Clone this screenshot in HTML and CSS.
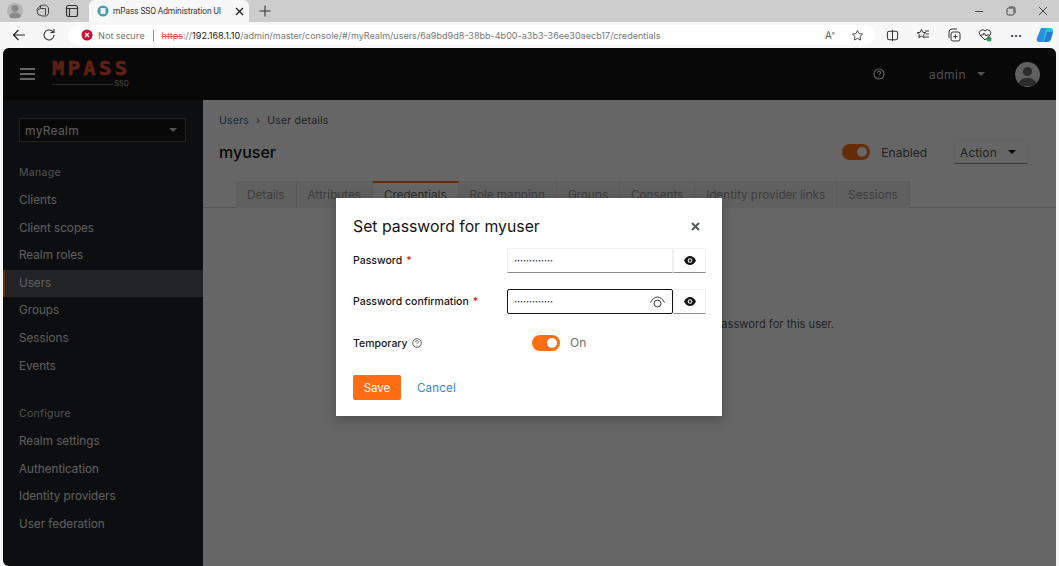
FILE: index.html
```html
<!DOCTYPE html>
<html lang="en">

<head>
    <meta charset="UTF-8">
    <meta name="viewport" content="width=device-width, initial-scale=1.0">
    <title>mPass SSO Administration UI</title>
    <link rel="stylesheet" href="styles.css">
</head>

<body>
    <div class="tabbar">
        <span class="profile">
            <svg width="16" height="16" viewBox="0 0 16 16"><circle cx="8" cy="5.500" r="3.400" fill="#8a8a8a"/><path d="M2 15c0-4 2.500-5.500 6-5.500s6 1.500 6 5.500z" fill="#8a8a8a"/></svg>
        </span>
        <svg class="tab-tool" width="14" height="14" viewBox="0 0 14 14" fill="none" stroke="#444"><path d="M4.500 1.500l5-.5 3 2.500v6l-2 2.500h-4l-4.500-1.500-1-5z"/><path d="M4.500 4.500h5v6.500M4.500 1.500v3l-3 1.500"/></svg>
        <svg class="tab-tool" width="14" height="14" viewBox="0 0 14 14" fill="none" stroke="#333" stroke-width="1.200"><rect x="1.500" y="1.500" width="11" height="11" rx="2"/><path d="M1.500 4.500h11M4.500 4.500v8"/></svg>
        <div class="tab">
            <svg class="tab-icon" width="12" height="12" viewBox="0 0 12 12"><circle cx="6" cy="6" r="5.500" fill="#4a9bb5"/><rect x="3.500" y="3" width="5" height="6" fill="#e8f4f8"/></svg>
            <span class="tab-title">mPass SSO Administration UI</span>
            <svg class="tab-icon" width="9" height="9" viewBox="0 0 9 9" stroke="#222" stroke-width="1.300"><path d="M1 1l7 7M8 1l-7 7"/></svg>
        </div>
        <svg class="new-tab" width="12" height="12" viewBox="0 0 12 12" stroke="#333" stroke-width="1.100"><path d="M6 .5v11M.5 6h11"/></svg>
        <div class="window-btns">
            <svg width="10" height="10" viewBox="0 0 10 10" stroke="#444"><path d="M1 5.500h8"/></svg>
            <svg width="10" height="10" viewBox="0 0 10 10" fill="none" stroke="#444"><rect x="1" y="2" width="7" height="7" rx="1.500"/><path d="M3 1h4.500a1.500 1.500 0 0 1 1.500 1.500V7"/></svg>
            <svg width="10" height="10" viewBox="0 0 10 10" stroke="#444"><path d="M1 1l8 8M9 1l-8 8"/></svg>
        </div>
    </div>

    <div class="toolbar">
        <svg width="14" height="14" viewBox="0 0 14 14" fill="none" stroke="#222" stroke-width="1.200"><path d="M13 7H1.500M6.500 2l-5 5 5 5"/></svg>
        <svg class="reload" width="14" height="14" viewBox="0 0 14 14" fill="none" stroke="#333" stroke-width="1.100"><path d="M12 7a5 5 0 1 1-1.700-3.800L12 4.500M12 1v3.500H8.500"/></svg>
        <div class="addressbar">
            <svg class="tab-icon" width="12" height="12" viewBox="0 0 12 12"><circle cx="6" cy="6" r="5.500" fill="#c8102e"/><path d="M4 4l4 4M8 4l-4 4" stroke="#fff" stroke-width="1.200"/></svg>
            <span class="not-secure">Not secure</span>
            <span class="addr-sep"></span>
            <span class="url"><s class="url-https">https</s><span class="url-rest">://</span><span class="url-host">192.168.1.10</span><span class="url-rest">/admin/master/console/#/myRealm/users/6a9bd9d8-38bb-4b00-a3b3-36ee30aecb17/credentials</span></span>
            <span class="read-aloud">A<sup>»</sup></span>
            <svg width="13" height="13" viewBox="0 0 14 14" fill="none" stroke="#444"><path d="M7 1.500l1.700 3.500 3.800.5-2.800 2.600.7 3.800L7 10.100l-3.400 1.800.7-3.800-2.800-2.600 3.800-.5z"/></svg>
        </div>
        <div class="toolbar-icons">
            <svg width="13" height="13" viewBox="0 0 14 14" fill="none" stroke="#333" stroke-width="1.100"><rect x="1.500" y="2.500" width="11" height="9" rx="2"/><path d="M7 1v12"/></svg>
            <svg width="14" height="14" viewBox="0 0 14 14" fill="none" stroke="#333"><path d="M5.500 1.500l1.300 2.800 3 .4-2.200 2 .6 3-2.700-1.500-2.700 1.500.6-3L1.200 4.700l3-.4zM9 3h4M10 6h3M9 9h4"/></svg>
            <svg width="14" height="14" viewBox="0 0 14 14" fill="none" stroke="#333"><rect x="4" y="4" width="9" height="9" rx="2"/><path d="M8.500 6.500v4M6.500 8.500h4M2 10V4a3 3 0 0 1 3-3h5"/></svg>
            <svg width="14" height="14" viewBox="0 0 14 14" fill="none" stroke="#333"><path d="M7 12L2 7a3 3 0 0 1 5-4 3 3 0 0 1 5 4z"/><path d="M3 7h2l1-2 2 3 1-1h2"/><circle cx="11" cy="11" r="2.500" fill="#2e9e4f" stroke="none"/></svg>
            <span class="more-dots">···</span>
            <svg width="18" height="18" viewBox="0 0 18 18"><path d="M5 2h7L8 16H3C1 16 0 14 1 12z" fill="#2a8fe0"/><path d="M10 2h4c2 0 3.500 1.500 3 4l-2 7c-.5 2-2 3-4 3H7z" fill="#28c0d8"/><path d="M11 6h6l-2 7c-.5 2-2 3-4 3H8z" fill="#1d5fd0" opacity=".7"/></svg>
        </div>
    </div>

    <div class="page">
        <header class="masthead">
            <div class="burger"><i></i><i></i><i></i></div>
            <div class="logo">
                <div class="logo-word">MPASS</div>
                <div class="logo-sub"><span class="logo-line"></span><span>SSO</span></div>
            </div>
            <svg class="help-icon" width="12" height="12" viewBox="0 0 12 12" fill="none" stroke="#fff" stroke-width="1.100"><circle cx="6" cy="6" r="5"/><path d="M4.500 4.800a1.500 1.500 0 1 1 2.200 1.300c-.5.300-.7.500-.7 1"/><path d="M6 8.300v1"/></svg>
            <span class="user-name">admin</span>
            <span class="caret caret-light"></span>
            <span class="avatar">
                <svg width="25" height="25" viewBox="0 0 25 25"><circle cx="12.500" cy="9.500" r="4.500" fill="#6a6e72"/><path d="M3.500 24c0-5.500 3.500-8 9-8s9 2.500 9 8z" fill="#6a6e72"/></svg>
            </span>
        </header>

        <div class="layout">
            <aside class="sidebar">
                <div class="realm-select"><span>myRealm</span><span class="caret caret-light"></span></div>
                <div class="nav-title">Manage</div>
                <a class="nav-item">Clients</a>
                <a class="nav-item">Client scopes</a>
                <a class="nav-item">Realm roles</a>
                <a class="nav-item active">Users</a>
                <a class="nav-item">Groups</a>
                <a class="nav-item">Sessions</a>
                <a class="nav-item">Events</a>
                <div class="nav-title nav-title-2">Configure</div>
                <a class="nav-item">Realm settings</a>
                <a class="nav-item">Authentication</a>
                <a class="nav-item">Identity providers</a>
                <a class="nav-item">User federation</a>
            </aside>

            <main class="content">
                <div class="breadcrumb"><a>Users</a><span class="crumb-sep">›</span><span>User details</span></div>
                <div class="title-row">
                    <h1 class="user-title">myuser</h1>
                    <span class="switch"><i></i></span>
                    <span class="switch-label">Enabled</span>
                    <div class="action-btn"><span>Action</span><span class="caret"></span></div>
                </div>
                <div class="tabs">
                    <span class="page-tab">Details</span>
                    <span class="page-tab">Attributes</span>
                    <span class="page-tab current">Credentials</span>
                    <span class="page-tab">Role mapping</span>
                    <span class="page-tab">Groups</span>
                    <span class="page-tab">Consents</span>
                    <span class="page-tab">Identity provider links</span>
                    <span class="page-tab">Sessions</span>
                </div>
                <p class="empty-text">This user does not have any credentials. You can set a password for this user.</p>
            </main>
        </div>

        <div class="backdrop">
            <div class="modal">
                <div class="modal-head">
                    <h2 class="modal-title">Set password for myuser</h2>
                    <svg width="9" height="9" viewBox="0 0 9 9" stroke="#55595d" stroke-width="2"><path d="M1 1l7 7M8 1l-7 7"/></svg>
                </div>
                <div class="form-row">
                    <label class="form-label">Password <em>*</em></label>
                    <div class="pw-group">
                        <div class="pw-input">·············</div>
                        <div class="pw-eye">
                            <svg width="12" height="9" viewBox="0 0 12 9"><path d="M0 4.500C1.500 1.500 3.500 0 6 0s4.500 1.500 6 4.500C10.500 7.500 8.500 9 6 9S1.500 7.500 0 4.500z" fill="#151515"/><circle cx="6" cy="4.500" r="2.200" fill="#fff"/><circle cx="6" cy="4.500" r="1.200" fill="#151515"/></svg>
                        </div>
                    </div>
                </div>
                <div class="form-row">
                    <label class="form-label">Password confirmation <em>*</em></label>
                    <div class="pw-group">
                        <div class="pw-input focused">
                            <span>·············</span>
                            <svg width="15" height="12" viewBox="0 0 15 12" fill="none" stroke="#333"><path d="M.5 6.500C2.500 3 4.800 1 7.500 1s5 2 7 5.500"/><circle cx="7.500" cy="7.500" r="3.500"/></svg>
                        </div>
                        <div class="pw-eye">
                            <svg width="12" height="9" viewBox="0 0 12 9"><path d="M0 4.500C1.500 1.500 3.500 0 6 0s4.500 1.500 6 4.500C10.500 7.500 8.500 9 6 9S1.500 7.500 0 4.500z" fill="#151515"/><circle cx="6" cy="4.500" r="2.200" fill="#fff"/><circle cx="6" cy="4.500" r="1.200" fill="#151515"/></svg>
                        </div>
                    </div>
                </div>
                <div class="form-row temp-row">
                    <label class="form-label">Temporary
                        <svg width="10" height="10" viewBox="0 0 10 10" fill="none" stroke="#555" stroke-width=".9"><circle cx="5" cy="5" r="4.300"/><path d="M3.700 4a1.300 1.300 0 1 1 1.900 1.100c-.4.200-.6.400-.6.800M5 6.800v.9"/></svg>
                    </label>
                    <div class="temp-switch">
                        <span class="switch switch-on"><i></i></span>
                        <span class="on-label">On</span>
                    </div>
                </div>
                <div class="modal-foot">
                    <button class="save-btn">Save</button>
                    <a class="cancel-link">Cancel</a>
                </div>
            </div>
        </div>
    </div>
</body>

</html>
```

FILE: styles.css
```css
* {
    margin: 0;
    padding: 0;
    box-sizing: border-box;
    font-family: 'Inter', 'Liberation Sans', sans-serif;
}

body {
    width: 1059px;
    height: 566px;
    overflow: hidden;
    background: #f7f7f7;
    display: flex;
    flex-direction: column;
}

/* browser frame */
.tabbar {
    height: 22px;
    background: #cdcdcd;
    display: flex;
    align-items: center;
    padding-left: 7px;
    flex-shrink: 0;
}
.profile {
    width: 16px;
    height: 16px;
    border-radius: 50%;
    background: #b4b4b4;
    overflow: hidden;
}
.tab-tool {
    margin-left: 13px;
}
.tab-tool + .tab-tool {
    margin-left: 15px;
}
.tab {
    width: 160px;
    height: 22px;
    margin-left: 10px;
    background: #f7f7f7;
    border-radius: 6px 6px 0 0;
    display: flex;
    align-items: center;
    padding: 0 5px 0 8px;
}
.tab-icon {
    flex-shrink: 0;
}
.tab-title {
    font-family: 'Roboto', sans-serif;
    font-size: 8.400px;
    letter-spacing: -.08px;
    color: #333;
    margin-left: 4px;
    flex: 1;
    white-space: nowrap;
    overflow: hidden;
}
.new-tab {
    margin-left: 10px;
}
.window-btns {
    margin-left: auto;
    display: flex;
    gap: 22px;
    padding-right: 11px;
}

.toolbar {
    height: 26px;
    background: #f7f7f7;
    display: flex;
    align-items: center;
    padding: 0 0 0 12px;
    flex-shrink: 0;
}
.reload {
    margin-left: 16px;
}
.addressbar {
    width: 807px;
    height: 20px;
    margin-left: 12px;
    background: #fff;
    border-radius: 10px;
    display: flex;
    align-items: center;
    padding: 0 11px 0 13px;
}
.not-secure {
    font-family: 'Open Sans', sans-serif;
    font-size: 9.200px;
    color: #666;
    margin-left: 5px;
}
.addr-sep {
    width: 1px;
    height: 11px;
    background: #888;
    margin: 0 8px;
}
.url {
    font-family: 'Open Sans', sans-serif;
    font-size: 9.050px;
    flex: 1;
    white-space: nowrap;
}
.url-https {
    color: #d9534f;
}
.url-rest {
    color: #777;
}
.url-host {
    color: #222;
}
.read-aloud {
    font-family: 'Open Sans', sans-serif;
    font-size: 10px;
    color: #555;
    margin-right: 16px;
}
.read-aloud sup {
    font-size: 6px;
}
.toolbar-icons {
    display: flex;
    align-items: center;
    gap: 17px;
    margin-left: 11px;
}
.more-dots {
    font-size: 12px;
    font-weight: 700;
    color: #333;
    margin-left: 1px;
    margin-right: -3px;
}

/* page */
.page {
    position: relative;
    flex: 1;
    margin: 0 3px 0 3px;
    border-radius: 6px 6px 0 6px;
    overflow: hidden;
    background: #fff;
    display: flex;
    flex-direction: column;
}
.masthead {
    height: 52px;
    background: #151515;
    display: flex;
    align-items: center;
    padding: 0 16px 0 17px;
    color: #fff;
    flex-shrink: 0;
}
.burger {
    display: flex;
    flex-direction: column;
    gap: 3px;
    width: 15px;
}
.burger i {
    height: 2px;
    background: #fff;
}
.logo {
    margin-left: 17px;
    width: 77px;
    margin-top: 1px;
}
.logo-word {
    font-family: 'DejaVu Sans Mono', monospace;
    font-weight: 700;
    font-size: 19px;
    line-height: 15px;
    height: 15px;
    letter-spacing: 3.200px;
    color: #f0502f;
    -webkit-text-stroke: .5px #f0502f;
    transform: scaleX(1.07);
    transform-origin: left;
}
.logo-sub {
    display: flex;
    align-items: center;
    gap: 2px;
    margin-top: 4px;
    font-size: 7px;
    line-height: 8px;
    color: #999;
    font-weight: 600;
}
.logo-line {
    flex: 1;
    height: 1px;
    background: #666;
}
.help-icon {
    margin-left: auto;
}
.user-name {
    margin-left: 44px;
    font-size: 12px;
    letter-spacing: .5px;
    color: #c8c8c8;
}
.caret {
    display: inline-block;
    width: 0;
    height: 0;
    border-left: 4px solid transparent;
    border-right: 4px solid transparent;
    border-top: 4px solid #151515;
}
.caret-light {
    border-top-color: #ccc;
}
.masthead .caret {
    margin-left: 11px;
}
.avatar {
    width: 25px;
    height: 25px;
    border-radius: 50%;
    background: #f0f0f0;
    margin-left: 30px;
    overflow: hidden;
}

.layout {
    flex: 1;
    display: flex;
    min-height: 0;
}
.sidebar {
    width: 200px;
    background: #212427;
    padding-top: 18px;
    color: #e8e8e8;
    flex-shrink: 0;
}
.realm-select {
    width: 167px;
    height: 24px;
    margin-left: 16px;
    background: #151515;
    border: 1px solid #555;
    display: flex;
    align-items: center;
    justify-content: space-between;
    padding: 0 8px 0 5px;
    font-size: 12px;
    letter-spacing: .3px;
}
.nav-title {
    font-size: 10.500px;
    letter-spacing: .3px;
    padding-left: 16px;
    margin-top: 23px;
    height: 22px;
    line-height: 16px;
    color: #c8c8c8;
}
.nav-title-2 {
    margin-top: 26px;
}
.nav-item {
    display: block;
    height: 27.600px;
    line-height: 27.600px;
    padding-left: 16px;
    font-size: 11.700px;
}
.nav-item.active {
    background: #55585b;
    border-left: 2px solid #ff6d12;
    padding-left: 14px;
}

.content {
    flex: 1;
    background: #fff;
    min-width: 0;
}
.breadcrumb {
    padding: 14px 0 0 16px;
    font-size: 10.500px;
    letter-spacing: .2px;
    color: #555;
    line-height: 14px;
    display: flex;
    gap: 7px;
}
.breadcrumb a {
    color: #3d6aa0;
}
.title-row {
    display: flex;
    align-items: center;
    height: 26px;
    margin-top: 11px;
    padding-left: 16px;
}
.user-title {
    font-size: 16px;
    font-weight: 500;
    color: #151515;
    flex: 1;
}
.switch {
    width: 28px;
    height: 16px;
    border-radius: 8px;
    background: #ff6d12;
    display: flex;
    align-items: center;
    justify-content: flex-end;
    padding-right: 3px;
}
.switch i {
    width: 10px;
    height: 10px;
    border-radius: 50%;
    background: #fff;
}
.switch-label {
    font-size: 12px;
    color: #555;
    margin: 0 27px 0 11px;
}
.action-btn {
    width: 74px;
    height: 24px;
    border: 1px solid #f4f4f4;
    border-bottom-color: #8a8d90;
    display: flex;
    align-items: center;
    justify-content: space-between;
    padding: 0 11px 0 5px;
    font-size: 12px;
    letter-spacing: .1px;
    color: #555;
    margin-right: 28px;
}
.tabs {
    display: flex;
    margin-top: 16px;
    padding-left: 33px;
    border-bottom: 1px solid #d2d2d2;
    height: 27px;
}
.page-tab {
    background: #f0f0f0;
    border-right: 1px solid #e0e0e0;
    padding: 0 11px;
    font-size: 11.700px;
    line-height: 28px;
    color: #999;
    white-space: nowrap;
    height: 27px;
}
.page-tab.current {
    background: #fff;
    border-top: 2px solid #ff6d12;
    color: #6a6e73;
    line-height: 25px;
}
.empty-text {
    margin-top: 109px;
    text-align: center;
    font-size: 11.150px;
    color: #555;
}

/* dialog */
.backdrop {
    position: absolute;
    inset: 0;
    background: rgba(0, 0, 0, .6);
    display: flex;
    align-items: center;
    justify-content: center;
    padding-right: 1px;
}
.modal {
    width: 386px;
    height: 218px;
    background: #fff;
    padding: 0 16px 0 17px;
    box-shadow: 0 4px 12px rgba(0, 0, 0, .25);
}
.modal-head {
    height: 50px;
    display: flex;
    align-items: center;
    justify-content: space-between;
    padding: 7px 6px 0 0;
}
.modal-title {
    font-size: 15.800px;
    font-weight: 400;
    color: #151515;
}
.form-row {
    display: flex;
    align-items: center;
    height: 25px;
    margin-bottom: 16px;
}
.form-label {
    width: 154px;
    font-size: 10.500px;
    font-weight: 500;
    color: #151515;
    display: flex;
    align-items: center;
    gap: 4px;
}
.form-label em {
    color: #c9190b;
    font-style: normal;
}
.pw-group {
    flex: 1;
    display: flex;
    height: 25px;
}
.pw-input {
    flex: 1;
    border: 1px solid #f0f0f0;
    border-bottom-color: #8a8d90;
    font-size: 9px;
    font-weight: 700;
    color: #333;
    display: flex;
    align-items: center;
    justify-content: space-between;
    padding: 0 7px 0 6px;
}
.pw-input.focused {
    border: 1px solid #151515;
    border-radius: 2px;
}
.pw-eye {
    width: 33px;
    border: 1px solid #f0f0f0;
    border-bottom-color: #8a8d90;
    display: flex;
    align-items: center;
    justify-content: center;
}
.temp-row {
    margin-top: 20px;
    height: 17px;
    margin-bottom: 0;
}
.temp-row .form-label {
    padding-top: 1px;
}
.temp-switch {
    display: flex;
    align-items: center;
    padding-left: 25px;
}
.on-label {
    font-size: 12px;
    color: #6a6e73;
    margin-left: 10px;
}
.modal-foot {
    display: flex;
    align-items: center;
    margin-top: 24px;
}
.save-btn {
    width: 48px;
    height: 25px;
    border: none;
    border-radius: 2px;
    background: #ff6d12;
    color: #fff;
    font-size: 11.500px;
}
.cancel-link {
    margin-left: 16px;
    font-size: 11.500px;
    letter-spacing: .2px;
    color: #2b8ae8;
}
```
